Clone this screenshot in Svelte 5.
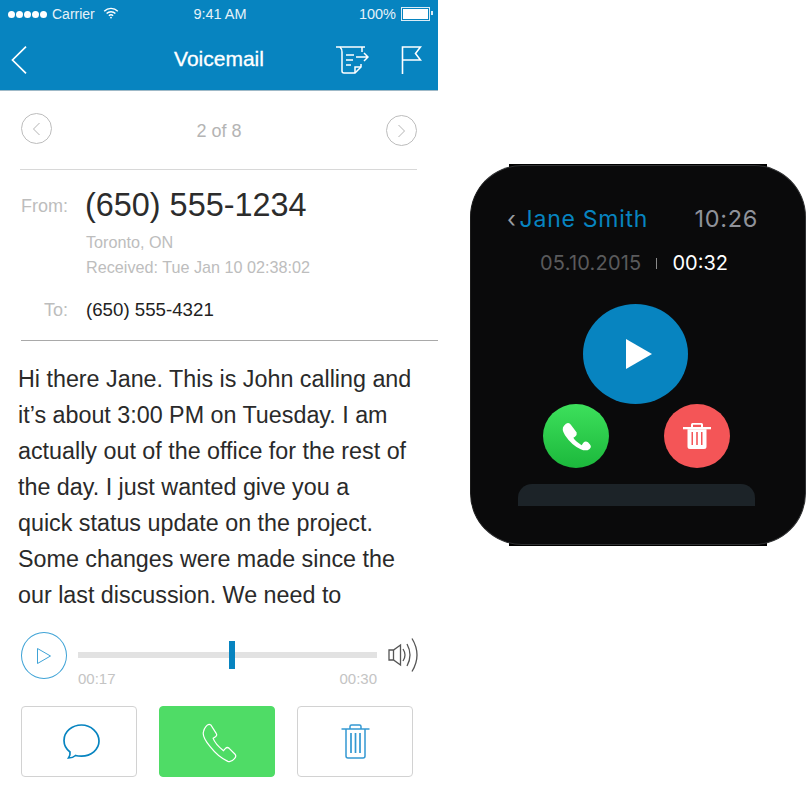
<script>
	const lines = [
		"Hi there Jane. This is John calling and",
		"it’s about 3:00 PM on Tuesday. I am",
		"actually out of the office for the rest of",
		"the day. I just wanted give you a",
		"quick status update on the project.",
		"Some changes were made since the",
		"our last discussion. We need to"
	];
	let progress = 50.5;
</script>

<div class="page">
	<div class="phone">
		<header class="topbar">
			<div class="status">
				<div class="status-left">
					<span class="dots"><i></i><i></i><i></i><i></i><i></i></span>
					<span>Carrier</span>
					<svg class="wifi" width="16" height="12" viewBox="0 0 16 12" fill="none" stroke="#fff" stroke-width="1.4">
						<path d="M1.2 4.2a9.6 9.6 0 0 1 13.6 0" />
						<path d="M3.6 6.6a6.2 6.2 0 0 1 8.8 0" />
						<path d="M5.9 8.8a3 3 0 0 1 4.2 0" />
						<circle cx="8" cy="10.6" r=".9" fill="#fff" stroke="none" />
					</svg>
				</div>
				<span class="clock">9:41 AM</span>
				<div class="status-right">
					<span>100%</span>
					<span class="battery"><b></b></span>
				</div>
			</div>
			<nav class="nav">
				<svg class="back" width="16" height="28" viewBox="0 0 16 28" fill="none" stroke="#fff" stroke-width="1.7">
					<path d="M15 .7 1.500 14 15 27.300" />
				</svg>
				<h1>Voicemail</h1>
				<div class="nav-actions">
					<svg width="33" height="28" viewBox="0 0 33 28" fill="none" stroke="#fff" stroke-width="1.500">
						<path d="M0 1h29" />
						<path d="M4 1c1.600 1.600 2 3 2 5v19q0 2 2 2h11l6-6v-3" />
						<path d="M26 1v5" />
						<path d="M19 27v-6h6" />
						<path d="M10 9h8M10 14h7M10 19h5" />
						<path d="M20 11h12M28 7l4 4-4 4" />
					</svg>
					<svg width="21" height="28" viewBox="0 0 21 28" fill="none" stroke="#fff" stroke-width="1.600">
						<path d="M1.500 28V1h18l-5 6.500 5 6.500h-18" />
					</svg>
				</div>
			</nav>
		</header>

		<div class="pager">
			<span class="round up"><svg width="9" height="14" viewBox="0 0 9 14" fill="none" stroke="#b4b4b4"><path d="M7.500 1 1.500 7l6 6" /></svg></span>
			<span class="count">2 of 8</span>
			<span class="round"><svg width="9" height="14" viewBox="0 0 9 14" fill="none" stroke="#b4b4b4"><path d="m1.500 1 6 6-6 6" /></svg></span>
		</div>

		<section class="details">
			<div class="row from">
				<span class="label">From:</span>
				<span class="number">(650) 555-1234</span>
			</div>
			<div class="meta">Toronto, ON</div>
			<div class="meta">Received: Tue Jan 10 02:38:02</div>
			<div class="row to">
				<span class="label">To:</span>
				<span class="number-small">(650) 555-4321</span>
			</div>
		</section>

		<div class="message">
			{#each lines as line}
				<div>{line}</div>
			{/each}
		</div>

		<div class="player">
			<span class="play">
				<svg width="14" height="16" viewBox="0 0 14 16" fill="none" stroke="#3fa3d6" stroke-width="1"><path d="M.5.500v15l13-7.500z" /></svg>
			</span>
			<div class="track-wrap">
				<div class="track">
					<div class="thumb" style:left="{progress}%"></div>
				</div>
				<div class="times"><span>00:17</span><span>00:30</span></div>
			</div>
			<svg class="speaker" width="30" height="34" viewBox="0 0 30 34" fill="none" stroke="#555" stroke-width="1.300">
				<path d="M1 12h4.500l7-5v20l-7-5h-4.500z" />
				<path d="M5.500 12v10" />
				<path d="M15 11q4 6 0 12" />
				<path d="M19 6q6 11 0 22" />
				<path d="M24 .5q10 16.500 0 33" />
			</svg>
		</div>

		<div class="actions">
			<button>
				<svg class="bubble" width="37" height="35" viewBox="0 0 37 35" fill="none" stroke="#0784c0" stroke-width="1.700">
					<path d="M5.500 34c2.500 0 5-.6 7-2.500 2 .5 4 .6 6 .6 9.500 0 17.500-6.500 17.500-15S28 1 18.500 1 1 7.700 1 16.500c0 4.800 2.300 8.700 6 11.500.4 2.500-.4 4.500-1.500 6z" />
				</svg>
			</button>
			<button class="call">
				<svg class="handset" width="35" height="40" viewBox="606 309 104 120" fill="none" stroke="#fff" stroke-width="3.600">
					<path d="M617 320Q624 310 632 315L648 340Q652 346 646 350L639 355Q645 372 670 392L676 385Q681 380 687 385L704 402Q710 408 703 416Q693 428 683 424Q655 412 630 380Q605 350 610 335Q612 326 617 320Z" />
				</svg>
			</button>
			<button>
				<svg width="29" height="35" viewBox="0 0 29 35" fill="none" stroke="#3398d2" stroke-width="1.500">
					<path d="M.5 5h28" />
					<path d="M9 5V2.500q0-1.500 1.500-1.500h8q1.500 0 1.500 1.500V5" />
					<path d="M5 5v27q0 2 2 2h15q2 0 2-2V5" />
					<path d="M10 9v20M14.500 9v20M19 9v20" stroke-width="1.700" />
				</svg>
			</button>
		</div>
	</div>

	<div class="watch-col">
		<div class="watch">
			<span class="lug top"></span>
			<span class="lug bottom"></span>
			<div class="watch-head">
				<span class="title"><span class="chev">‹</span>Jane Smith</span>
				<span class="watch-time">10:26</span>
			</div>
			<div class="watch-sub">
				<span class="date">05.10.2015</span>
				<span class="sep"></span>
				<span class="dur">00:32</span>
			</div>
			<div class="big-play">
				<svg width="28" height="32" viewBox="0 0 28 32"><path d="M1 1v30l26-15z" fill="#fff" /></svg>
			</div>
			<div class="watch-actions">
				<span class="circle green">
					<svg width="32" height="31" viewBox="300 108 96 92">
						<path d="M312 122Q322 108 332 118L350 142Q352 150 345 155L340 158Q347 170 365 180L370 173Q376 166 384 171L390 178Q396 186 388 192Q378 199 362 192Q335 180 315 150Q303 132 312 122Z" fill="#fff" />
					</svg>
				</span>
				<span class="circle red">
					<svg width="28" height="26" viewBox="0 0 28 26" fill="#fff">
						<path d="M0 4h28v2.300H0z" />
						<path d="M8 4.500V1.500q0-1.500 1.500-1.500h9q1.500 0 1.500 1.500v3h-2V1.800h-8v2.700z" />
						<path fill-rule="evenodd" d="M4.500 6.300h19v17.200q0 2.500-2.500 2.500H7q-2.500 0-2.500-2.500zM8.500 9v13H10V9zm4.700 0v13h1.600V9zm4.800 0v13h1.500V9z" />
					</svg>
				</span>
			</div>
			<div class="card"></div>
		</div>
	</div>
</div>

<style>
	:global(body) {
		margin: 0;
		background: #fff;
	}
	.page {
		display: flex;
		width: 806px;
		height: 800px;
		overflow: hidden;
		font-family: "Liberation Sans", Arial, sans-serif;
	}
	.phone {
		width: 438px;
		flex: none;
	}
	.topbar {
		height: 90px;
		background: #0784c0;
		border-bottom: 1px solid #9fb9c7;
		margin-bottom: -1px;
		color: #fff;
	}
	.status {
		display: grid;
		grid-template-columns: 1fr auto 1fr;
		align-items: center;
		height: 28px;
		padding: 0 6px 0 8px;
		font-size: 14.500px;
		color: #e6f2f8;
	}
	.status-left {
		display: flex;
		align-items: center;
		gap: 5px;
	}
	.status-left span:nth-child(2) {
		font-size: 14px;
	}
	.dots {
		display: flex;
		gap: 1px;
	}
	.dots i {
		width: 7px;
		height: 7px;
		border-radius: 50%;
		background: #fff;
	}
	.wifi {
		margin: -3px 0 0 3px;
	}
	.status-right {
		display: flex;
		align-items: center;
		justify-content: flex-end;
		gap: 5px;
	}
	.battery {
		display: block;
		width: 25px;
		height: 10px;
		padding: 1px;
		border: 1px solid #dcecf5;
		position: relative;
		margin-right: 2px;
	}
	.battery b {
		display: block;
		height: 100%;
		background: #fff;
	}
	.battery::after {
		content: "";
		position: absolute;
		right: -4px;
		top: 3px;
		width: 2px;
		height: 4px;
		background: #dcecf5;
	}
	.nav {
		display: flex;
		align-items: center;
		height: 62px;
		padding: 0 16px 0 11px;
		position: relative;
	}
	.nav h1 {
		position: absolute;
		left: 0;
		right: 0;
		top: 19px;
		margin: 0;
		text-align: center;
		font-size: 21px;
		line-height: 24px;
		font-weight: 400;
		-webkit-text-stroke: 0.3px #fff;
	}
	.back {
		margin-top: 2px;
	}
	.nav-actions {
		display: flex;
		gap: 32px;
		align-items: center;
		margin-left: auto;
		margin-top: 2px;
	}
	.pager {
		display: flex;
		justify-content: space-between;
		align-items: center;
		height: 80px;
		margin: 0 21px 0 20px;
		padding-left: 1px;
		border-bottom: 1px solid #d8d8d8;
		box-sizing: border-box;
	}
	.round {
		width: 31px;
		height: 31px;
		box-sizing: border-box;
		border: 1px solid #bdbdbd;
		border-radius: 50%;
		display: flex;
		align-items: center;
		justify-content: center;
		position: relative;
		top: 1px;
	}
	.round.up {
		top: -1px;
	}
	.count {
		font-size: 18px;
		color: #b4b4b4;
		position: relative;
		top: 2px;
	}
	.details {
		margin: 0 0 20px 21px;
		border-bottom: 1px solid #a9a9a9;
		height: 171px;
		box-sizing: border-box;
	}
	.row {
		display: flex;
		align-items: baseline;
	}
	.label {
		width: 47px;
		margin-right: 17px;
		text-align: right;
		font-size: 18px;
		color: #bdbdbd;
		flex: none;
	}
	.from {
		height: 49px;
		padding-top: 11px;
	}
	.from .label {
		position: relative;
		top: -4px;
	}
	.number {
		font-size: 32.400px;
		line-height: 48px;
		color: #2c2c2c;
	}
	.meta {
		margin-left: 65px;
		font-size: 16.200px;
		line-height: 25px;
		color: #bdbdbd;
	}
	.to {
		margin-top: 19px;
	}
	.number-small {
		font-size: 18.700px;
		color: #222;
		margin-left: 1px;
	}
	.message {
		padding-left: 18px;
		font-size: 23.300px;
		line-height: 36px;
		color: #2a2a2a;
		white-space: nowrap;
	}
	.player {
		display: flex;
		align-items: flex-start;
		margin: 19px 0 0 21px;
	}
	.play {
		width: 46px;
		height: 47px;
		box-sizing: border-box;
		border: 1px solid #3fa3d6;
		border-radius: 50%;
		display: flex;
		align-items: center;
		justify-content: center;
		flex: none;
	}
	.track-wrap {
		width: 299px;
		margin: 20px 0 0 11px;
	}
	.track {
		height: 6px;
		background: #e2e2e2;
		position: relative;
	}
	.thumb {
		position: absolute;
		top: -11px;
		width: 6px;
		height: 28px;
		background: #0784c0;
	}
	.times {
		display: flex;
		justify-content: space-between;
		margin-top: 12px;
		font-size: 15px;
		color: #c4c4c4;
	}
	.speaker {
		margin: 6px 0 0 11px;
	}
	.actions {
		display: flex;
		gap: 22px;
		margin: 19px 0 0 21px;
	}
	.actions button {
		width: 116px;
		height: 71px;
		padding: 0;
		border: 1px solid #d2d2d2;
		border-radius: 4px;
		background: #fff;
		display: flex;
		align-items: center;
		justify-content: center;
	}
	.actions button.call {
		background: #4fdc66;
		border-color: #4fdc66;
	}
	.bubble {
		margin-left: 4px;
	}
	.handset {
		margin: 3px 0 0 4px;
	}
	.watch-col {
		margin-left: 32px;
		padding-top: 165px;
	}
	.watch {
		position: relative;
		width: 336px;
		height: 380px;
		box-sizing: border-box;
		background: #0a0a0b;
		border-radius: 52px;
		border: 1px solid #2f3032;
		border-left-color: #1c1c1c;
		padding: 38px 32px 0;
		font-family: Inter, Roboto, sans-serif;
	}
	.lug {
		position: absolute;
		left: 38px;
		right: 38px;
		height: 4px;
		background: #000;
		z-index: -1;
	}
	.lug.top {
		top: -2px;
	}
	.lug.bottom {
		bottom: -2px;
	}
	.watch-head {
		display: flex;
		justify-content: space-between;
		align-items: baseline;
		padding-left: 4px;
		padding-right: 15px;
	}
	.title {
		font-size: 23px;
		color: #0784c0;
		letter-spacing: 0.75px;
	}
	.chev {
		color: #9a9da3;
		margin-right: 3px;
	}
	.watch-time {
		font-size: 23.500px;
		color: #8f929a;
		letter-spacing: 0.7px;
	}
	.watch-sub {
		display: flex;
		justify-content: center;
		align-items: center;
		gap: 15px;
		margin-top: 18px;
		font-size: 20px;
		padding-right: 8px;
	}
	.date {
		color: #5a5a5c;
		letter-spacing: 0.2px;
	}
	.dur {
		color: #fff;
	}
	.sep {
		width: 1px;
		height: 11px;
		background: #8a8a8a;
	}
	.big-play {
		width: 105px;
		height: 100px;
		border-radius: 50%;
		background: #0784c0;
		display: flex;
		align-items: center;
		justify-content: center;
		margin: 29px 0 0 80px;
		padding-left: 6px;
		box-sizing: border-box;
	}
	.watch-actions {
		display: flex;
		justify-content: space-between;
		padding: 0 43px 0 40px;
	}
	.circle {
		width: 66px;
		height: 64px;
		border-radius: 50%;
		display: flex;
		align-items: center;
		justify-content: center;
	}
	.green {
		background: linear-gradient(#3de05c, #1cb83c);
	}
	.red {
		background: #f45557;
	}
	.card {
		margin: 16px 18px 0 15px;
		height: 22px;
		border-radius: 14px 14px 0 0;
		background: #1c2328;
	}
</style>
